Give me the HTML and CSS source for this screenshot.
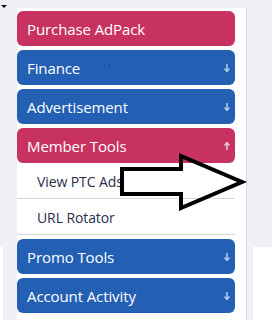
FILE: index.html
```html
<!DOCTYPE html>
<html>
<head>
<meta charset="utf-8">
<link rel="stylesheet" href="styles.css">
</head>
<body>
<div class="left-col">
  <svg class="caret" width="6" height="3" viewBox="0 0 6 3"><path d="M0 0H6L3 3Z" fill="#111"/></svg>
  <div class="left-card"></div>
</div>
<nav class="sidebar">
  <div class="btn pink">Purchase AdPack</div>
  <div class="btn blue">Finance<span class="dot"></span><svg class="ar" width="6" height="8" viewBox="0 0 6 8"><path d="M3 0V7M0.5 4.5L3 7.5L5.5 4.5" stroke="#b5cbee" stroke-width="1.5" fill="none"/></svg></div>
  <div class="btn blue">Advertisement<svg class="ar" width="6" height="8" viewBox="0 0 6 8"><path d="M3 0V7M0.5 4.5L3 7.5L5.5 4.5" stroke="#b5cbee" stroke-width="1.5" fill="none"/></svg></div>
  <div class="btn pink open">Member Tools<svg class="ar" width="6" height="8" viewBox="0 0 6 8"><path d="M3 8V1M0.5 3.5L3 0.5L5.5 3.5" stroke="#f2c6d4" stroke-width="1.5" fill="none"/></svg></div>
  <ul class="sub">
    <li>View PTC Ads</li>
    <li>URL Rotator</li>
  </ul>
  <div class="btn blue">Promo Tools<svg class="ar" width="6" height="8" viewBox="0 0 6 8"><path d="M3 0V7M0.5 4.5L3 7.5L5.5 4.5" stroke="#b5cbee" stroke-width="1.5" fill="none"/></svg></div>
  <div class="btn blue">Account Activity<svg class="ar" width="6" height="8" viewBox="0 0 6 8"><path d="M3 0V7M0.5 4.5L3 7.5L5.5 4.5" stroke="#b5cbee" stroke-width="1.5" fill="none"/></svg></div>
</nav>
<div class="right-card"></div>
<svg class="big-arrow" width="130" height="62" viewBox="0 0 130 62">
  <polygon points="2,16 61,16 61,3 122,29 61,55 61,41 2,41" fill="none" stroke="#000" stroke-width="4" stroke-linejoin="miter"/>
</svg>
</body>
</html>
```
FILE: styles.css
```css
html, body {
  margin: 0;
  padding: 0;
}
body {
  background: #eff0f5;
  width: 272px;
  height: 320px;
  overflow: hidden;
  display: flex;
  position: relative;
  font-family: "Open Sans", "Noto Sans", sans-serif;
}
.left-col {
  width: 17px;
  display: flex;
  flex-direction: column;
  flex-shrink: 0;
}
.caret {
  display: block;
  margin: 5px 0 0 1px;
}
.left-card {
  width: 3px;
  margin-top: 239px;
  flex: 1;
  background: #fff;
}
.sidebar {
  width: 218px;
  flex-shrink: 0;
  margin-top: 8px;
  padding: 3px 11px 0 0;
  background: #fff;
  border-right: 1px solid #dcdce2;
}
.btn {
  position: relative;
  height: 35px;
  margin-bottom: 4px;
  border-radius: 6px;
  padding: 0 5px 0 10px;
  display: flex;
  align-items: center;
  justify-content: space-between;
  color: #fff;
  font-size: 15px;
  letter-spacing: -0.1px;
}
.btn.open {
  margin-bottom: 0;
}
.pink {
  background: #c73260;
}
.blue {
  background: #2360b4;
}
.dot {
  position: absolute;
  left: 92px;
  top: 15px;
  width: 1px;
  height: 1px;
  background: #111;
}
.sub {
  list-style: none;
  margin: 0 0 4px;
  padding: 0;
}
.sub li {
  height: 33px;
  padding: 2px 0 0 20px;
  display: flex;
  align-items: center;
  border-bottom: 1px solid #d6d6da;
  color: #2b2d4a;
  font-size: 14px;
  letter-spacing: -0.1px;
}
.right-card {
  flex: 1;
  margin: 247px 0 0 6px;
  background: #fff;
}
.big-arrow {
  position: absolute;
  left: 120px;
  top: 153px;
}
```
